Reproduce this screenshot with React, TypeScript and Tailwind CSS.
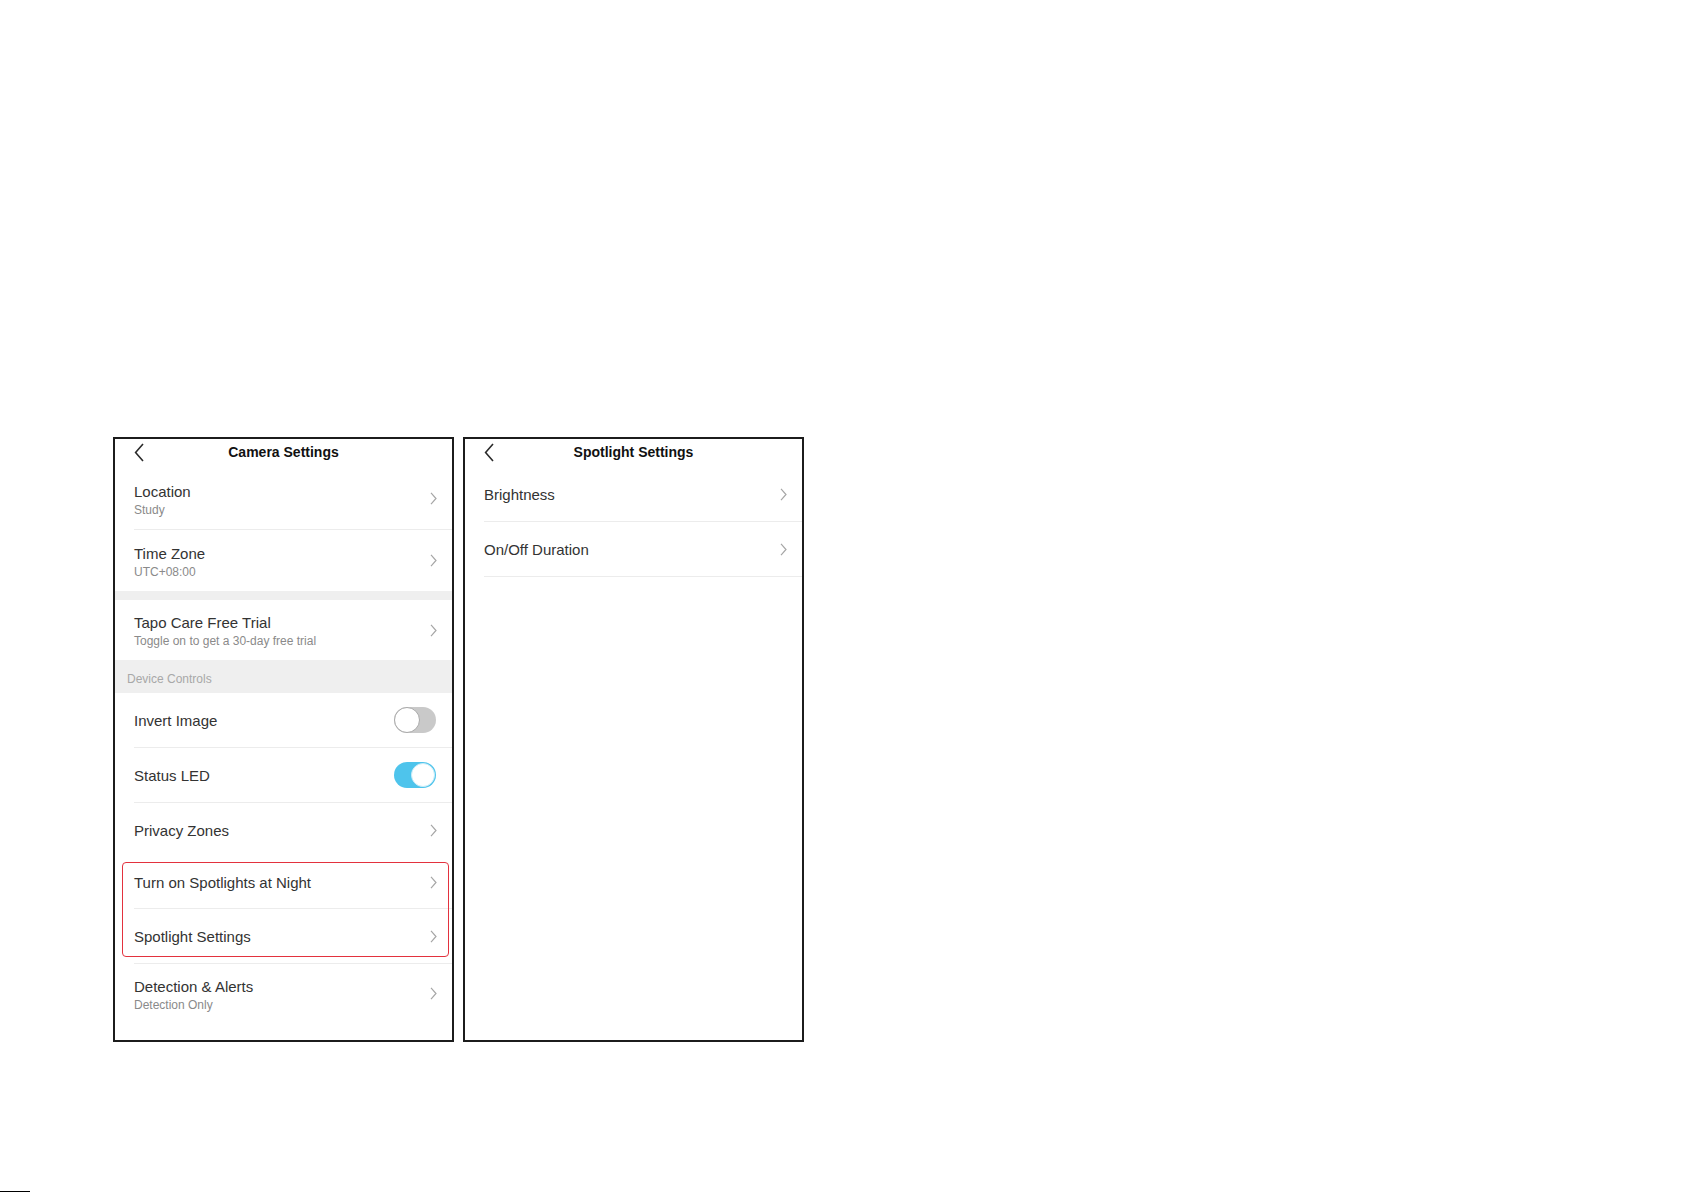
import React from 'react';

const font = { fontFamily: '"Liberation Sans", Arial, sans-serif' };

function Chevron() {
    return (
        <svg width="7" height="13" viewBox="0 0 7 13" className="shrink-0">
            <polyline points="1,0.8 6,6.5 1,12.2" fill="none" stroke="#a6a6a6" strokeWidth="1.2" />
        </svg>
    );
}

function BackArrow() {
    return (
        <svg width="10" height="19" viewBox="0 0 10 19">
            <polyline points="9,1 1.6,9.5 9,18" fill="none" stroke="#2b2b2b" strokeWidth="1.6" />
        </svg>
    );
}

function Header({ title }: { title: string }) {
    return (
        <div className="grid h-[29px] grid-cols-[1fr_auto_1fr] items-center pb-[3px]">
            <div className="pl-[19px]">
                <BackArrow />
            </div>
            <div className="text-[14px] font-bold text-[#111]">{title}</div>
            <div />
        </div>
    );
}

function Toggle({ on }: { on: boolean }) {
    return on ? (
        <div className="flex h-[26px] w-[42px] items-center justify-end rounded-full bg-[#4ec4ec] p-[1px]">
            <div className="h-[24px] w-[24px] rounded-full border border-[#c8ecf8] bg-white" />
        </div>
    ) : (
        <div className="flex h-[26px] w-[42px] items-center rounded-full bg-[#c9c9c9]">
            <div className="h-[26px] w-[26px] rounded-full border border-[#a9a9a9] bg-white" />
        </div>
    );
}

type RowProps = {
    title: string;
    sub?: string;
    h: string;
    divider?: boolean;
    right?: React.ReactNode;
};

function Row({ title, sub, h, divider, right }: RowProps) {
    return (
        <div className={`pl-[19px] ${h}`}>
            <div
                className={`flex h-full items-center justify-between pr-[15px] ${
                    divider ? 'border-b border-[#ececec]' : ''
                }`}
            >
                <div className={`flex flex-col gap-[2px] ${sub ? 'pt-[2px]' : 'pt-px'}`}>
                    <span className="text-[15px] leading-[18px] text-[#333]">{title}</span>
                    {sub && <span className="text-[12px] leading-[14px] text-[#8a8a8a]">{sub}</span>}
                </div>
                {right ?? <Chevron />}
            </div>
        </div>
    );
}

function CameraSettings() {
    return (
        <div className="flex h-[605px] w-[341px] flex-col border-2 border-[#1c1c1c] bg-white">
            <Header title="Camera Settings" />
            <Row title="Location" sub="Study" h="h-[62px]" divider />
            <Row title="Time Zone" sub="UTC+08:00" h="h-[61px]" />
            <div className="h-[9px] bg-[#efefef]" />
            <Row title="Tapo Care Free Trial" sub="Toggle on to get a 30-day free trial" h="h-[60px]" />
            <div className="flex h-[33px] items-center bg-[#efefef] pt-[5px] pl-[12px] text-[12px] text-[#a8a8a8]">
                Device Controls
            </div>
            <Row title="Invert Image" h="h-[55px]" divider right={<div className="mr-[1px]"><Toggle on={false} /></div>} />
            <Row title="Status LED" h="h-[55px]" divider right={<div className="mr-[1px]"><Toggle on /></div>} />
            <Row title="Privacy Zones" h="h-[54px]" />
            <div className="relative">
                <Row title="Turn on Spotlights at Night" h="h-[52px]" divider />
                <Row title="Spotlight Settings" h="h-[55px]" divider />
                {/* highlight frame around the spotlight entries */}
                <div className="pointer-events-none absolute top-[5px] right-[3px] bottom-[7px] left-[7px] rounded-[4px] border border-[#e3323e]" />
            </div>
            <Row title="Detection & Alerts" sub="Detection Only" h="h-[59px]" />
        </div>
    );
}

function SpotlightSettings() {
    return (
        <div className="flex h-[605px] w-[341px] flex-col border-2 border-[#1c1c1c] bg-white">
            <Header title="Spotlight Settings" />
            <Row title="Brightness" h="h-[54px]" divider />
            <Row title="On/Off Duration" h="h-[55px]" divider />
        </div>
    );
}

export default function App() {
    return (
        <div className="flex h-[1192px] w-[1685px] flex-col bg-white" style={font}>
            <div className="flex gap-[9px] pt-[437px] pl-[113px]">
                <CameraSettings />
                <SpotlightSettings />
            </div>
            <div className="mt-auto h-px w-[30px] bg-black" />
        </div>
    );
}
